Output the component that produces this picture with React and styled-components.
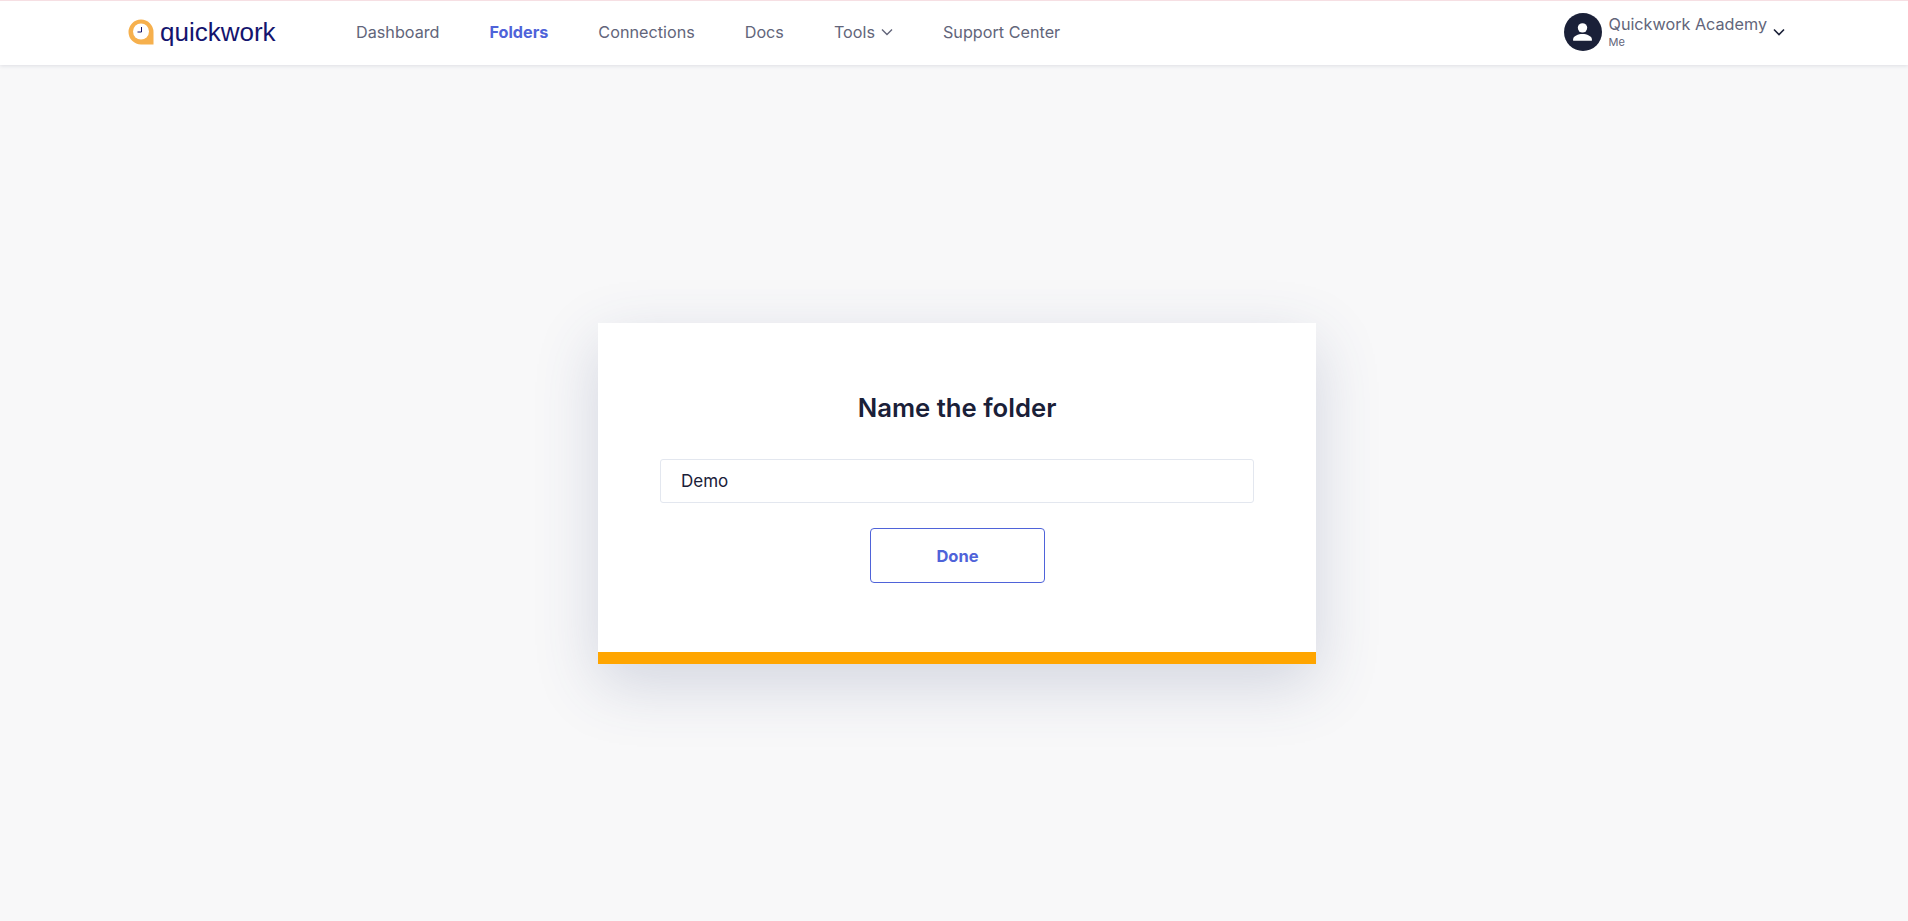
import React from "react";
import styled, { createGlobalStyle } from "styled-components";

const GlobalStyle = createGlobalStyle`
  html, body {
    margin: 0;
    padding: 0;
    background: #f8f8f9;
    font-family: "Inter", "Liberation Sans", sans-serif;
  }
`;

const navItems = [
  { name: "Dashboard" },
  { name: "Folders", active: true },
  { name: "Connections" },
  { name: "Docs" },
  { name: "Tools", menu: true },
  { name: "Support Center" },
];

const App = () => {
  return (
    <Page>
      <GlobalStyle />
      <Header>
        <Logo>
          <svg width="26" height="26" viewBox="0 0 26 26">
            <path
              d="M13 0.5a12.5 12.5 0 1 0 0 25H25.5V13A12.5 12.5 0 0 0 13 0.5z"
              fill="#f6b04d"
            />
            <circle cx="13" cy="12.5" r="8" fill="#fff" />
            <path d="M13.5 8v5H9.5" fill="none" stroke="#14146e" strokeWidth="1" />
          </svg>
          <LogoText>quickwork</LogoText>
        </Logo>
        <Nav>
          {navItems.map((item) => (
            <NavItem key={item.name} $active={item.active}>
              {item.name}
              {item.menu && (
                <svg width="12" height="8" viewBox="0 0 12 8">
                  <path d="M1 1.5l5 5 5-5" fill="none" stroke="#62657a" strokeWidth="1.4" />
                </svg>
              )}
            </NavItem>
          ))}
        </Nav>
        <User>
          <Avatar>
            <svg width="25" height="25" viewBox="0 0 24 24">
              <circle cx="12" cy="7.5" r="4.5" fill="#fff" />
              <path
                d="M3 20v-1.5C3 15.5 8 13.5 12 13.5s9 2 9 5V20z"
                fill="#fff"
              />
            </svg>
          </Avatar>
          <UserText>
            <UserName>Quickwork Academy</UserName>
            <UserRole>Me</UserRole>
          </UserText>
          <svg width="12" height="8" viewBox="0 0 12 8">
            <path d="M1 1.5l5 5 5-5" fill="none" stroke="#1a2038" strokeWidth="1.6" />
          </svg>
        </User>
      </Header>
      <Main>
        <Card>
          <CardBody>
            <Title>Name the folder</Title>
            <NameInput defaultValue="Demo" />
            <DoneButton>Done</DoneButton>
          </CardBody>
          <CardBar />
        </Card>
      </Main>
    </Page>
  );
};

export default App;

const Page = styled.div`
  min-height: 921px;
  overflow: hidden;
`;

const Header = styled.header`
  display: flex;
  align-items: center;
  box-sizing: border-box;
  height: 65px;
  padding: 0 123px 2px 128px;
  background: #fff;
  border-top: 1px solid #f6dfe3;
  box-shadow: 0 1px 4px rgba(30, 40, 70, 0.12);
`;

const Logo = styled.div`
  display: flex;
  align-items: center;
  gap: 6px;
  width: 228px;
`;

const LogoText = styled.span`
  font-family: "Liberation Sans", sans-serif;
  font-size: 26px;
  color: #14146e;
`;

const Nav = styled.nav`
  display: flex;
  align-items: center;
  gap: 50px;
`;

const NavItem = styled.div`
  display: flex;
  align-items: center;
  gap: 6px;
  font-size: 16.2px;
  font-weight: ${(p) => (p.$active ? 700 : 400)};
  color: ${(p) => (p.$active ? "#4f63d9" : "#62657a")};
`;

const User = styled.div`
  display: flex;
  align-items: center;
  margin-left: auto;
`;

const Avatar = styled.div`
  display: flex;
  align-items: center;
  justify-content: center;
  width: 38px;
  height: 38px;
  border-radius: 50%;
  background: #1a2038;
`;

const UserText = styled.div`
  display: flex;
  flex-direction: column;
  margin: 0 6px 0 7px;
  padding-bottom: 3px;
`;

const UserName = styled.div`
  font-size: 16.2px;
  line-height: 20px;
  color: #62657a;
`;

const UserRole = styled.div`
  margin-top: 2px;
  font-size: 11px;
  line-height: 12px;
  color: #62657a;
`;

const Main = styled.main`
  display: flex;
  justify-content: center;
  padding: 258px 0 0 6px;
`;

const Card = styled.section`
  display: flex;
  flex-direction: column;
  width: 718px;
  height: 341px;
  background: #fff;
  box-shadow: 0 20px 60px rgba(60, 75, 125, 0.2);
`;

const CardBody = styled.div`
  flex: 1;
  display: flex;
  flex-direction: column;
  align-items: center;
  padding-top: 68px;
`;

const Title = styled.h2`
  margin: 0 0 34px;
  font-size: 25.7px;
  line-height: 34px;
  font-weight: 600;
  color: #1a2038;
`;

const NameInput = styled.input`
  box-sizing: border-box;
  width: 594px;
  height: 44px;
  padding: 0 20px;
  border: 1px solid #e3e7ef;
  border-radius: 3px;
  font-family: inherit;
  font-size: 17px;
  color: #1a2038;
  outline: none;
`;

const DoneButton = styled.button`
  box-sizing: border-box;
  width: 175px;
  height: 55px;
  margin: 25px 0 0 1px;
  background: #fff;
  border: 1px solid #4f63d9;
  border-radius: 4px;
  font-family: inherit;
  font-size: 16.5px;
  font-weight: 700;
  color: #4f63d9;
`;

const CardBar = styled.div`
  height: 12px;
  background: #ffa500;
`;
